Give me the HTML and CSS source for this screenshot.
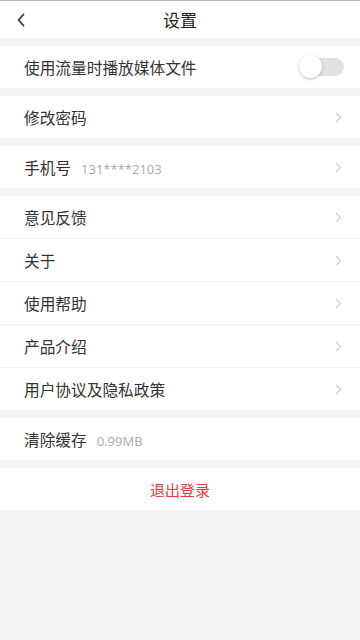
FILE: index.html
```html
<!DOCTYPE html>
<html lang="zh">
<head>
<meta charset="utf-8">
<link rel="stylesheet" href="styles.css">
</head>
<body>
<div class="page">
  <header class="header">
    <span class="back">
      <svg width="10" height="14" viewBox="0 0 10 14"><path d="M7.5 1.5 L2.5 7 L7.5 12.5" fill="none" stroke="#333" stroke-width="1.8" stroke-linecap="round" stroke-linejoin="round"/></svg>
    </span>
    <h1 class="title">设置</h1>
  </header>

  <section class="group">
    <div class="row">
      <span class="label">使用流量时播放媒体文件</span>
      <span class="toggle"><span class="knob"></span></span>
    </div>
  </section>

  <section class="group">
    <div class="row">
      <span class="label">修改密码</span>
      <span class="chev"><svg width="7" height="11" viewBox="0 0 7 11"><path d="M1 1 L5.5 5.5 L1 10" fill="none" stroke="#cccccc" stroke-width="1.1"/></svg></span>
    </div>
  </section>

  <section class="group">
    <div class="row">
      <span class="label">手机号<span class="value">131****2103</span></span>
      <span class="chev"><svg width="7" height="11" viewBox="0 0 7 11"><path d="M1 1 L5.5 5.5 L1 10" fill="none" stroke="#cccccc" stroke-width="1.1"/></svg></span>
    </div>
  </section>

  <section class="group list">
    <div class="row">
      <span class="label">意见反馈</span>
      <span class="chev"><svg width="7" height="11" viewBox="0 0 7 11"><path d="M1 1 L5.5 5.5 L1 10" fill="none" stroke="#cccccc" stroke-width="1.1"/></svg></span>
    </div>
    <div class="row">
      <span class="label">关于</span>
      <span class="chev"><svg width="7" height="11" viewBox="0 0 7 11"><path d="M1 1 L5.5 5.5 L1 10" fill="none" stroke="#cccccc" stroke-width="1.1"/></svg></span>
    </div>
    <div class="row">
      <span class="label">使用帮助</span>
      <span class="chev"><svg width="7" height="11" viewBox="0 0 7 11"><path d="M1 1 L5.5 5.5 L1 10" fill="none" stroke="#cccccc" stroke-width="1.1"/></svg></span>
    </div>
    <div class="row">
      <span class="label">产品介绍</span>
      <span class="chev"><svg width="7" height="11" viewBox="0 0 7 11"><path d="M1 1 L5.5 5.5 L1 10" fill="none" stroke="#cccccc" stroke-width="1.1"/></svg></span>
    </div>
    <div class="row">
      <span class="label">用户协议及隐私政策</span>
      <span class="chev"><svg width="7" height="11" viewBox="0 0 7 11"><path d="M1 1 L5.5 5.5 L1 10" fill="none" stroke="#cccccc" stroke-width="1.1"/></svg></span>
    </div>
  </section>

  <section class="group">
    <div class="row">
      <span class="label">清除缓存<span class="value">0.99MB</span></span>
    </div>
  </section>

  <section class="group">
    <div class="row logout">退出登录</div>
  </section>
</div>
</body>
</html>
```

FILE: styles.css
```css
* { box-sizing: border-box; margin: 0; padding: 0; }
html, body { width: 360px; height: 640px; }
body {
  background: #f4f4f4;
  font-family: "Noto Sans CJK SC", "Noto Sans", sans-serif;
  color: #333;
  overflow: hidden;
}
.page {
  display: flex;
  flex-direction: column;
  gap: 8px;
  border-top: 1px solid #b4b4b4;
  min-height: 640px;
}
.header {
  height: 37px;
  background: #fff;
  display: flex;
  align-items: center;
  justify-content: center;
  position: relative;
}
.back {
  position: absolute;
  left: 16px;
  top: 12px;
  display: flex;
}
.title {
  font-size: 17px;
  font-weight: 400;
  color: #222;
  line-height: 1;
}
.group {
  background: #fff;
  display: flex;
  flex-direction: column;
}
.row {
  height: 42px;
  display: flex;
  align-items: center;
  justify-content: space-between;
  padding: 0 18px 0 24px;
}
.list .row + .row { border-top: 1px solid #f3f3f3; height: 43px; }
.label {
  font-size: 15.7px;
  font-weight: 400;
  color: #333;
  display: flex;
  align-items: baseline;
}
.value {
  font-size: 13px;
  font-weight: 400;
  color: #aaaaaa;
  margin-left: 10px;
  font-family: "Open Sans", "Noto Sans", sans-serif;
}
.chev { display: flex; }
.toggle {
  width: 43px;
  height: 18px;
  border-radius: 9px;
  background: #e2e2e2;
  position: relative;
  margin-right: -2px;
}
.knob {
  position: absolute;
  left: -2px;
  top: -3px;
  width: 23px;
  height: 23px;
  border-radius: 50%;
  background: #fff;
  box-shadow: 0 1px 3px rgba(0,0,0,0.25);
}
.logout {
  justify-content: center;
  padding: 0;
  color: #e8383d;
  font-size: 15px;
  font-weight: 400;
}
```
